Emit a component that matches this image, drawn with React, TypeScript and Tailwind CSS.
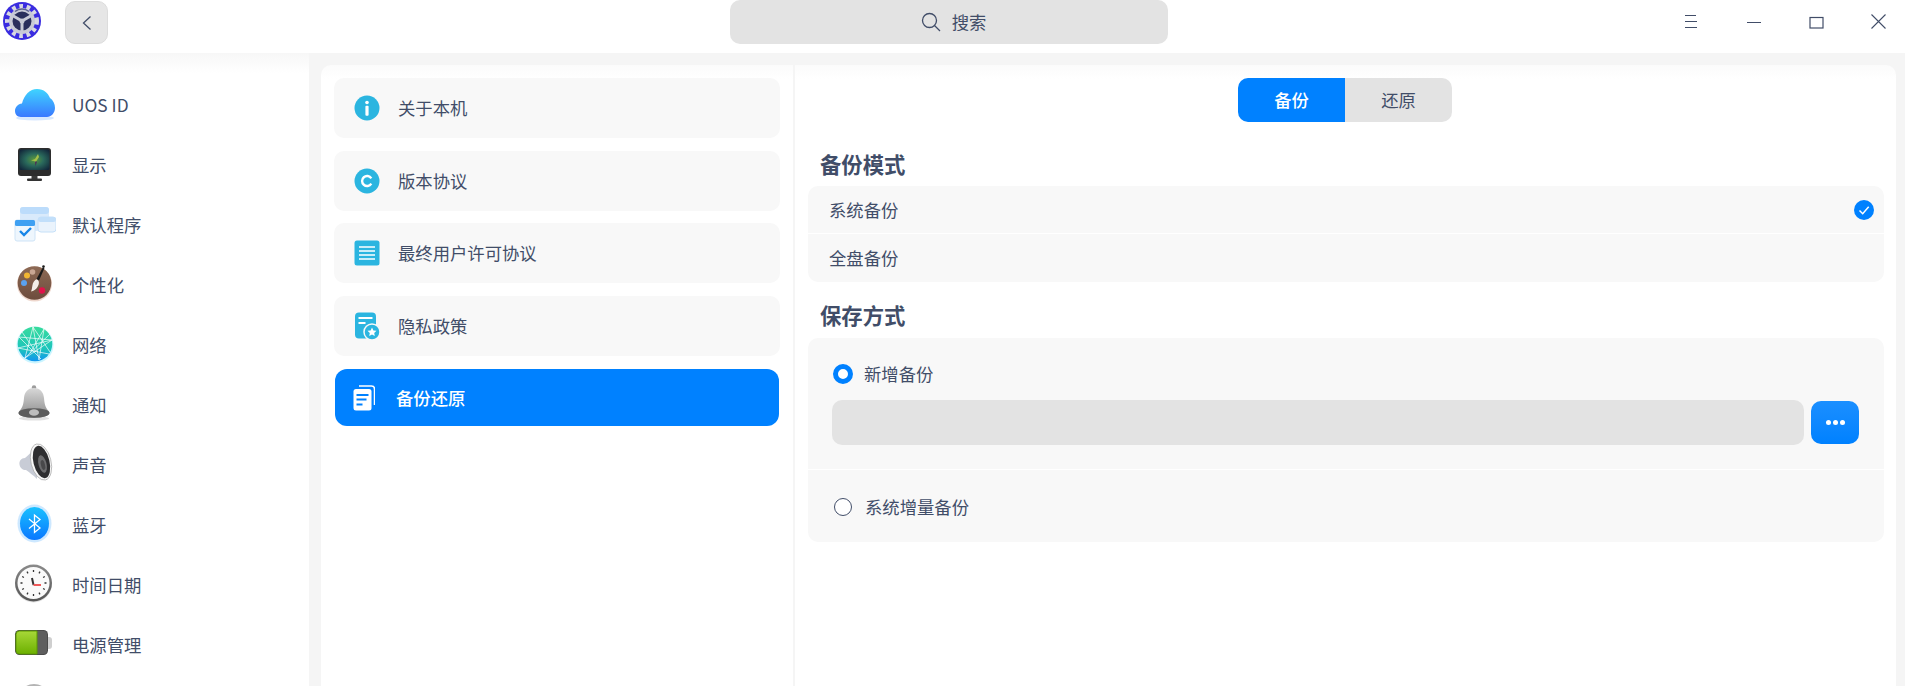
import React from 'react';

const CloudIcon = () => (
  <svg width="44" height="44" viewBox="0 0 44 44">
    <defs>
      <linearGradient id="cloudFill" x1="0" y1="0" x2="0" y2="1">
        <stop offset="0" stopColor="#3fd4ff" />
        <stop offset="1" stopColor="#3a78ff" />
      </linearGradient>
    </defs>
    <ellipse cx="23" cy="35" rx="19" ry="2.500" fill="#3a8cff" opacity="0.2" />
    <path d="M9 34C5 34 3 31 3 28C3 24 6 21 10 20.500C12 12 18 6 25 6C32 6 36 10 38 15C41 17 43 21 43 25C43 30 39 34 35 34Z" fill="url(#cloudFill)" />
  </svg>
);

const MonitorIcon = () => (
  <svg width="44" height="44" viewBox="0 0 44 44">
    <defs>
      <radialGradient id="screenFill" cx="0.5" cy="0.5" r="0.65">
        <stop offset="0" stopColor="#5c9a3c" />
        <stop offset="0.45" stopColor="#2a6a5c" />
        <stop offset="1" stopColor="#12263a" />
      </radialGradient>
    </defs>
    <path d="M19.500 33h6v3h-6z" fill="#3a3a3a" />
    <rect x="15" y="35.500" width="15" height="2.500" rx="1" fill="#333" />
    <rect x="6" y="5" width="33" height="28" rx="3" fill="#2d2d2d" />
    <rect x="7.500" y="6.500" width="30" height="20.500" rx="1.500" fill="url(#screenFill)" />
    <path d="M26 11l-3 5-4 1.500 3.500.5 1 2 1.500-3 2-3z" fill="#a4c04a" />
    <path d="M23 18.500l.5 5 1.500-5z" fill="#4a2a5a" />
  </svg>
);

const DefaultAppsIcon = () => (
  <svg width="44" height="44" viewBox="0 0 44 44">
    <rect x="8" y="4" width="29" height="24" rx="3" fill="#d9eafb" />
    <rect x="8" y="4" width="29" height="7" rx="3" fill="#bcdcfb" />
    <rect x="26" y="14" width="18" height="15" rx="3" fill="#eaf3fc" stroke="#c6e0f8" />
    <rect x="26" y="14" width="18" height="5" rx="2.500" fill="#c2dffa" />
    <rect x="3" y="17" width="20" height="21" rx="2" fill="#eef6fd" stroke="#cfe4f7" />
    <rect x="3" y="17" width="20" height="6" rx="1.500" fill="#3fa0f2" />
    <path d="M8 28l4 4 7-7" fill="none" stroke="#1585e8" strokeWidth="2.400" />
  </svg>
);

const PaletteIcon = () => (
  <svg width="44" height="44" viewBox="0 0 44 44">
    <defs>
      <linearGradient id="woodFill" x1="0" y1="0" x2="0" y2="1">
        <stop offset="0" stopColor="#8d6a55" />
        <stop offset="1" stopColor="#6d4c3d" />
      </linearGradient>
    </defs>
    <circle cx="22.500" cy="21" r="17.500" fill="#c8795a" opacity="0.3" />
    <circle cx="22.500" cy="20" r="16.800" fill="url(#woodFill)" />
    <circle cx="15" cy="12.500" r="3" fill="#f2b632" />
    <circle cx="20.500" cy="9" r="2.800" fill="#c9a794" />
    <circle cx="12" cy="20" r="3" fill="#5aa2f0" />
    <circle cx="30" cy="27.500" r="3.200" fill="#e0134a" />
    <path d="M25 16c2.500 1.500 2.500 5 .5 8-1.500 2.500-4 4-6.500 4.500 1-2 1-4 1.400-6 .5-3 2-5.500 4.600-6.500z" fill="#f4efe8" />
    <path d="M24.500 16l6.500-12 1.500 1-5.500 12.500z" fill="#1a1a1a" />
    <circle cx="31.500" cy="3.500" r="1.300" fill="#1a1a1a" />
  </svg>
);

const GlobeIcon = () => (
  <svg width="44" height="44" viewBox="0 0 44 44">
    <defs>
      <linearGradient id="globeFill" x1="0" y1="0" x2="0" y2="1">
        <stop offset="0" stopColor="#38dc9c" />
        <stop offset="0.65" stopColor="#1cc4bc" />
        <stop offset="1" stopColor="#1094f0" />
      </linearGradient>
    </defs>
    <circle cx="23" cy="22" r="18.500" fill="#30d8ff" opacity="0.25" />
    <circle cx="23" cy="21" r="17.300" fill="url(#globeFill)" />
    <g stroke="#fff" strokeWidth="0.800" opacity="0.85" fill="none">
      <path d="M21 4l-8 31M21 4l17 25M21 4l6 33M7 14l33 3M7 14l22 22M6 25l34-8M6 25l31 6M13 35l27-18M10 9l14 20M32 6l-14 24M32 6l-5 31M38 11l-25 24" />
    </g>
  </svg>
);

const BellIcon = () => (
  <svg width="44" height="44" viewBox="0 0 44 44">
    <defs>
      <linearGradient id="bellFill" x1="0" y1="0" x2="0" y2="1">
        <stop offset="0" stopColor="#d8d8d8" />
        <stop offset="1" stopColor="#8a8a8a" />
      </linearGradient>
    </defs>
    <ellipse cx="22" cy="35.500" rx="15" ry="2" fill="#999" opacity="0.3" />
    <circle cx="22" cy="4.500" r="2.200" fill="#9c9c9c" />
    <path d="M22 5c-6.500 0-9.500 4.500-10 10-.4 5-1 9-4.500 13-1.500 1.800-1 3.500 1 4.500 7 3 20 3 27 0 2-1 2.500-2.700 1-4.500-3.500-4-4.100-8-4.500-13-.5-5.500-3.500-10-10-10z" fill="url(#bellFill)" />
    <ellipse cx="22" cy="30" rx="15.500" ry="4.800" fill="#5c5c5c" />
    <ellipse cx="22" cy="29.500" rx="5" ry="3.300" fill="#bdbdbd" />
  </svg>
);

const SpeakerIcon = () => (
  <svg width="44" height="44" viewBox="0 0 44 44">
    <path d="M25 2C20 8 17 12 13 15c-4 0-6 3-5.500 6.500.5 3.500 3 5.500 6.500 5.500 4 3 7 5 11 9z" fill="#c8ccd6" />
    <ellipse cx="29" cy="19" rx="10" ry="18.500" transform="rotate(-14 29 19)" fill="#f8f8f8" stroke="#9a9a9a" strokeWidth="0.600" />
    <ellipse cx="29.500" cy="19" rx="8" ry="16.500" transform="rotate(-14 29.500 19)" fill="#2e2e30" />
    <ellipse cx="30.500" cy="21" rx="4" ry="9" transform="rotate(-14 30.500 21)" fill="#6c6c6e" />
    <ellipse cx="31" cy="22" rx="2" ry="5" transform="rotate(-14 31 22)" fill="#48484a" />
  </svg>
);

const BluetoothIcon = () => (
  <svg width="44" height="44" viewBox="0 0 44 44">
    <defs>
      <linearGradient id="btFill" x1="0" y1="0" x2="0" y2="1">
        <stop offset="0" stopColor="#18c0ff" />
        <stop offset="1" stopColor="#0a78ff" />
      </linearGradient>
    </defs>
    <ellipse cx="22.500" cy="20.500" rx="17" ry="19" fill="#4aaeff" opacity="0.28" />
    <ellipse cx="22.500" cy="20.500" rx="14.500" ry="16.500" fill="url(#btFill)" />
    <path d="M17 16l11 9-5.500 4.500V12l5.500 4.500-11 9" fill="none" stroke="#fff" strokeWidth="1.300" />
  </svg>
);

const ClockIcon = () => (
  <svg width="44" height="44" viewBox="0 0 44 44">
    <defs>
      <linearGradient id="clockRim" x1="0" y1="0" x2="0" y2="1">
        <stop offset="0" stopColor="#8a8a8a" />
        <stop offset="1" stopColor="#555" />
      </linearGradient>
    </defs>
    <circle cx="21.500" cy="21" r="18.500" fill="#888" opacity="0.25" />
    <circle cx="21.500" cy="20" r="18.500" fill="url(#clockRim)" />
    <circle cx="21.500" cy="20" r="16" fill="#fafafa" />
    <g stroke="#333" strokeWidth="1.300" transform="translate(-0.500 -2)">
      <path d="M22 9v2M22 33v2M9 22h2M33 22h2M15.500 10.700l1 1.700M28.500 10.700l-1 1.700M10.700 15.500l1.700 1M33.300 15.500l-1.700 1M10.700 28.500l1.700-1M33.300 28.500l-1.700-1M15.500 33.300l1-1.700M28.500 33.300l-1-1.700" />
    </g>
    <path d="M20 15l1.500 7" stroke="#333" strokeWidth="2" />
    <path d="M21.500 22h7.500" stroke="#f05a5a" strokeWidth="2" />
  </svg>
);

const BatteryIcon = () => (
  <svg width="44" height="44" viewBox="0 0 44 44">
    <defs>
      <linearGradient id="batFill" x1="0" y1="0" x2="0" y2="1">
        <stop offset="0" stopColor="#a8d838" />
        <stop offset="1" stopColor="#6cb000" />
      </linearGradient>
    </defs>
    <rect x="33" y="14" width="7" height="12" rx="3" fill="#cfcfcf" />
    <rect x="3" y="7" width="33" height="25" rx="4.500" fill="#4a4a4a" />
    <rect x="4" y="8" width="31" height="23" rx="3.500" fill="#5e5e5e" />
    <path d="M7.500 8H25v23H7.500A3.500 3.500 0 0 1 4 27.500v-16A3.500 3.500 0 0 1 7.500 8z" fill="url(#batFill)" stroke="#5c9a00" />
  </svg>
);

const GeneralIcon = () => (
  <svg width="44" height="44" viewBox="0 0 44 44">
    <circle cx="22" cy="17" r="16" fill="#b4b4b4" />
  </svg>
);

const Logo = () => (
  <svg width="38" height="38" viewBox="0 0 38 38">
    <circle cx="19" cy="19" r="19" fill="#3a2ce0" />
    <circle cx="19" cy="19" r="14.500" fill="none" stroke="#d8d8e2" strokeWidth="5" strokeDasharray="3.600 3.650" />
    <circle cx="19" cy="19" r="13" fill="#c8cad6" />
    <circle cx="19" cy="19" r="9.500" fill="#2a2f5c" />
    <path d="M19 19V30M19 19L9.500 13.500M19 19L28.500 13.500" stroke="#c8cad6" strokeWidth="3" />
    <circle cx="19" cy="19" r="2.500" fill="#c8cad6" />
    <path d="M12 9.500a11 11 0 0 1 14 0" fill="none" stroke="#5a6090" strokeWidth="1.500" />
  </svg>
);

const InfoIcon = () => (
  <svg width="26" height="26" viewBox="0 0 26 26">
    <circle cx="13" cy="13" r="12.500" fill="#2bb5e0" />
    <circle cx="13" cy="7.500" r="1.800" fill="#fff" />
    <rect x="11.400" y="10.800" width="3.200" height="10" rx="1" fill="#fff" />
  </svg>
);

const CopyrightIcon = () => (
  <svg width="26" height="26" viewBox="0 0 26 26">
    <circle cx="13" cy="13" r="12.500" fill="#2bb5e0" />
    <path d="M17.300 10.300a5 5 0 1 0 0 5.400" fill="none" stroke="#fff" strokeWidth="2.400" />
  </svg>
);

const LicenseIcon = () => (
  <svg width="26" height="26" viewBox="0 0 26 26">
    <rect x="0.500" y="0.500" width="25" height="25" rx="2.500" fill="#2bb5e0" />
    <path d="M5 7h16M5 11h16M5 15h16M5 19h16" stroke="#fff" strokeWidth="1.400" />
  </svg>
);

const PrivacyIcon = () => (
  <svg width="26" height="28" viewBox="0 0 26 28">
    <rect x="1" y="0.500" width="21" height="26" rx="4" fill="#2bb5e0" />
    <path d="M4.500 6h14" stroke="#fff" strokeWidth="2" />
    <path d="M4.500 11h7" stroke="#fff" strokeWidth="2" />
    <circle cx="18" cy="20" r="8" fill="#2bb5e0" stroke="#f8f8f8" strokeWidth="1.500" />
    <path d="M18 15.500l1.400 2.900 3.100.4-2.300 2.100.6 3.100-2.800-1.500-2.800 1.500.6-3.100-2.300-2.100 3.100-.4z" fill="#fff" />
  </svg>
);

const BackupIcon = () => (
  <svg width="22" height="26" viewBox="0 0 22 26">
    <path d="M6 1h12.500A3 3 0 0 1 21.500 4v16" fill="none" stroke="#fff" strokeWidth="1.500" />
    <rect x="0.500" y="4" width="18" height="21.500" rx="2.500" fill="#fff" />
    <path d="M3.500 10h12M3.500 14.500h10M3.500 19.500h6" stroke="#0081ff" strokeWidth="2" />
  </svg>
);

const sideItems = [
  { label: 'UOS ID', icon: <CloudIcon /> },
  { label: '显示', icon: <MonitorIcon /> },
  { label: '默认程序', icon: <DefaultAppsIcon /> },
  { label: '个性化', icon: <PaletteIcon /> },
  { label: '网络', icon: <GlobeIcon /> },
  { label: '通知', icon: <BellIcon /> },
  { label: '声音', icon: <SpeakerIcon /> },
  { label: '蓝牙', icon: <BluetoothIcon /> },
  { label: '时间日期', icon: <ClockIcon /> },
  { label: '电源管理', icon: <BatteryIcon /> },
  { label: '', icon: <GeneralIcon /> },
];

const menuItems = [
  { label: '关于本机', icon: <InfoIcon /> },
  { label: '版本协议', icon: <CopyrightIcon /> },
  { label: '最终用户许可协议', icon: <LicenseIcon /> },
  { label: '隐私政策', icon: <PrivacyIcon /> },
];

export default function App() {
  return (
    <div className="flex h-[686px] w-[1905px] flex-col overflow-hidden bg-[#f5f5f5] font-['Noto_Sans_CJK_SC','Noto_Sans',sans-serif] text-[17.33px] text-[#414d68]">
      {/* title bar */}
      <div className="relative flex h-[53px] shrink-0 items-start bg-white">
        <div className="ml-[3px] mt-[2px]">
          <Logo />
        </div>
        <button className="ml-6 mt-px flex h-[43px] w-[43px] items-center justify-center rounded-[10px] border border-[#dcdcdc] bg-[#e6e6e6]">
          <svg width="10" height="16" viewBox="0 0 10 16" fill="none" stroke="#414d68" strokeWidth="1.300">
            <path d="M8.500 1.500L1.500 8l7 6.500" />
          </svg>
        </button>
        <div className="ml-[622px] flex h-[44px] w-[438px] items-center justify-center gap-[11px] rounded-[10px] bg-[#e3e3e3] pl-[9px]">
          <svg width="20" height="20" viewBox="0 0 20 20" fill="none" stroke="#414d68" strokeWidth="1.300">
            <circle cx="8.500" cy="8.500" r="7" />
            <path d="M13.500 13.500l5.500 5.500" />
          </svg>
          <span>搜索</span>
        </div>
        <div className="ml-[516px] mt-[14px] flex">
          <svg width="14" height="15" viewBox="0 0 14 15" fill="none" stroke="#414d68">
            <path d="M1 1.500h11M1 7.500h12M1 13.500h12" />
          </svg>
          <svg className="ml-[49px]" width="15" height="15" viewBox="0 0 15 15" fill="none" stroke="#414d68">
            <path d="M0 8.500h14" />
          </svg>
          <svg className="ml-[47px]" width="15" height="15" viewBox="0 0 15 15" fill="none" stroke="#414d68" strokeWidth="1.200">
            <rect x="1" y="3.500" width="13" height="10.500" />
          </svg>
          <svg className="ml-[47px]" width="15" height="15" viewBox="0 0 15 15" fill="none" stroke="#414d68" strokeWidth="1.100">
            <path d="M0.500 0.500l14 14M14.500 0.500l-14 14" />
          </svg>
        </div>
      </div>

      <div className="flex min-h-0 flex-1">
        {/* sidebar */}
        <div className="w-[309px] shrink-0 bg-gradient-to-b from-[#f7f7f7] to-white to-[20px] pt-[22px]">
          {sideItems.map((item, i) => (
            <div key={i} className="flex h-[60px] items-center gap-4 pl-3">
              <div className="h-[44px] w-[44px] shrink-0">{item.icon}</div>
              {item.label && <span>{item.label}</span>}
            </div>
          ))}
        </div>

        {/* middle list */}
        <div className="ml-3 mt-3 flex w-[472px] shrink-0 flex-col gap-[12.5px] rounded-tl-[10px] bg-gradient-to-b from-[#fbfbfb] to-white to-[14px] px-[13px] pt-[13px]">
          {menuItems.map((item) => (
            <div key={item.label} className="flex h-[60px] items-center gap-[18px] rounded-[10px] bg-[#f8f8f8] pl-5">
              <div className="flex w-[26px] justify-center">{item.icon}</div>
              <span>{item.label}</span>
            </div>
          ))}
          <div className="mx-px mt-px flex h-[57px] items-center gap-[21px] rounded-[12px] bg-[#0081ff] pl-[18px] font-medium text-white">
            <BackupIcon />
            <span>备份还原</span>
          </div>
        </div>

        {/* right panel */}
        <div className="ml-[2px] mt-3 w-[1101px] shrink-0 rounded-tr-[10px] bg-gradient-to-b from-[#fbfbfb] to-white to-[14px] pl-[13px] pr-3 pt-[13px]">
          <div className="flex justify-center pr-[2px]">
            <div className="flex h-[44px] w-[107px] items-center justify-center rounded-l-[10px] bg-[#0081ff] font-medium text-white">备份</div>
            <div className="flex h-[44px] w-[107px] items-center justify-center rounded-r-[10px] bg-[#e3e3e3]">还原</div>
          </div>

          <h2 className="mt-[22px] h-[40px] pl-3 text-[21.33px] font-bold leading-[40px]">备份模式</h2>
          <div className="mt-[2px] overflow-hidden rounded-[10px] bg-[#f8f8f8]">
            <div className="flex h-[48px] items-center justify-between border-b border-white pl-[21px] pr-[10px]">
              <span>系统备份</span>
              <svg width="20" height="20" viewBox="0 0 20 20">
                <circle cx="10" cy="10" r="10" fill="#0081ff" />
                <path d="M5.500 10.500l3.200 3.200 6-7" fill="none" stroke="#fff" strokeWidth="1.500" />
              </svg>
            </div>
            <div className="flex h-[48px] items-center pl-[21px]">全盘备份</div>
          </div>

          <h2 className="mt-[13px] h-[40px] pl-3 text-[21.33px] font-bold leading-[40px]">保存方式</h2>
          <div className="mt-[3px] overflow-hidden rounded-[10px] bg-[#f8f8f8]">
            <div className="h-[132px] border-b border-white pl-6 pr-[25px] pt-[26px]">
              <div className="ml-px flex h-[20px] items-center gap-[11px]">
                <span className="h-[20px] w-[20px] rounded-full border-[5px] border-[#0081ff] bg-white" />
                <span>新增备份</span>
              </div>
              <div className="mt-4 flex items-center gap-[7px]">
                <div className="h-[45px] flex-1 rounded-[10px] bg-[#e3e3e3]" />
                <button className="flex h-[43px] w-[48px] items-center justify-center gap-[2px] rounded-[10px] bg-gradient-to-b from-[#1a8fff] to-[#0081ff]">
                  <span className="h-[5px] w-[5px] rounded-full bg-white" />
                  <span className="h-[5px] w-[5px] rounded-full bg-white" />
                  <span className="h-[5px] w-[5px] rounded-full bg-white" />
                </button>
              </div>
            </div>
            <div className="flex h-[72px] items-center gap-[13px] pl-[26px] pt-px">
              <span className="h-[18px] w-[18px] rounded-full border border-[#414d68] bg-white" />
              <span>系统增量备份</span>
            </div>
          </div>
        </div>
      </div>
    </div>
  );
}
